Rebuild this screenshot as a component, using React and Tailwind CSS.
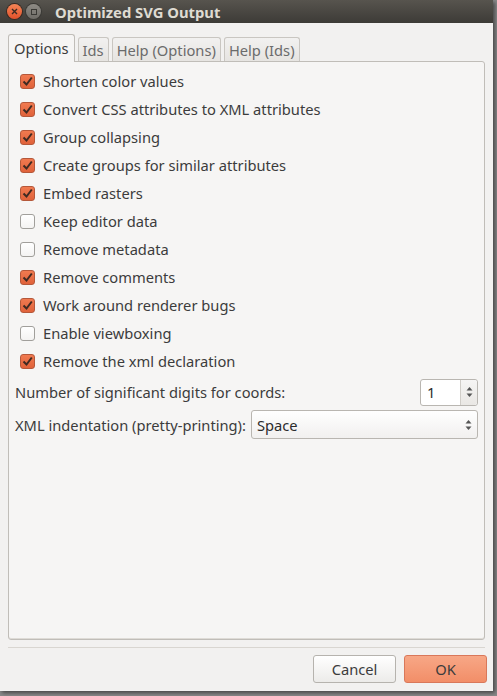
import { useState } from "react";

const options = [
  ["Shorten color values", true],
  ["Convert CSS attributes to XML attributes", true],
  ["Group collapsing", true],
  ["Create groups for similar attributes", true],
  ["Embed rasters", true],
  ["Keep editor data", false],
  ["Remove metadata", false],
  ["Remove comments", true],
  ["Work around renderer bugs", true],
  ["Enable viewboxing", false],
  ["Remove the xml declaration", true],
];

function Check({ checked, onClick }) {
  return (
    <span
      onClick={onClick}
      className={
        "flex h-[15px] w-[15px] shrink-0 items-center justify-center rounded-[3px] border " +
        (checked
          ? "border-[#b5583a] bg-gradient-to-b from-[#f07a50] to-[#e0623a]"
          : "border-[#a19f9b] bg-gradient-to-b from-white to-[#f4f3f2]")
      }
    >
      {checked && (
        <svg width="11" height="11" viewBox="0 0 11 11">
          <path d="M1.5 5.5 L4.5 8.5 L9.8 1.5" fill="none" stroke="#3f2a22" strokeWidth="2" />
        </svg>
      )}
    </span>
  );
}

function Arrows() {
  return (
    <svg width="7" height="12" viewBox="0 0 7 12">
      <path d="M3.5 1 L6.5 4.5 L0.5 4.5 Z" fill="#555" />
      <path d="M3.5 11 L6.5 7.5 L0.5 7.5 Z" fill="#555" />
    </svg>
  );
}

export default function App() {
  const [checks, setChecks] = useState(options.map((o) => o[1]));
  const tabs = ["Ids", "Help (Options)", "Help (Ids)"];

  return (
    <div className="h-[696px] w-[497px] bg-[#8a8a8a] font-['Noto_Sans',sans-serif] text-[14.7px] leading-[20px] text-[#3c3c3c]">
      <div className="flex h-[691px] w-[493px] flex-col bg-[#f2f1f0] shadow-[2px_2px_4px_rgba(0,0,0,0.5)]">
        <div className="flex h-[23px] items-center bg-gradient-to-b from-[#57544e] to-[#3d3b37] pl-[7px]">
          <span className="flex h-[15px] w-[15px] items-center justify-center rounded-full bg-gradient-to-b from-[#f58455] to-[#e1502a] shadow-[0_0_0_1px_#3a2a22]">
            <svg width="7" height="7" viewBox="0 0 7 7">
              <path d="M1 1 L6 6 M6 1 L1 6" stroke="#3c2a22" strokeWidth="1.4" />
            </svg>
          </span>
          <span className="ml-[4px] flex h-[15px] w-[15px] items-center justify-center rounded-full bg-gradient-to-b from-[#8e8b85] to-[#6f6c67] shadow-[0_0_0_1px_#3a3935]">
            <span className="h-[6px] w-[6px] border border-[#3a3935]" />
          </span>
          <span className="ml-[14px] text-[14.8px] font-bold text-[#dfdbd2]">Optimized SVG Output</span>
        </div>

        <div className="flex flex-1 flex-col px-[8px] pt-[11px]">
          <div className="flex items-end">
            <div className="relative z-10 -mb-px flex h-[28px] items-center rounded-t-[3px] border border-b-0 border-[#c0bdb8] bg-[#f6f5f4] px-[5px] pb-[2px] text-[#3c3c3c]">
              Options
            </div>
            {tabs.map((t) => (
              <div
                key={t}
                className="ml-[3px] flex h-[24px] items-center rounded-t-[3px] border border-b-0 border-[#c9c6c1] bg-gradient-to-b from-[#f2f1f0] to-[#e6e4e1] px-[4px] text-[#6b6b6b]"
              >
                {t}
              </div>
            ))}
          </div>

          <div className="flex h-[579px] flex-col rounded-b-[3px] rounded-tr-[3px] border border-[#c0bdb8] bg-[#f6f5f4] pl-[10px] pr-[6px] pt-[5px] shadow-[inset_0_-1px_0_#dedbd6]">
            {options.map(([label], i) => (
              <label key={label} className="flex h-[28px] items-center gap-[8px] pl-px">
                <Check
                  checked={checks[i]}
                  onClick={() => setChecks(checks.map((c, j) => (j === i ? !c : c)))}
                />
                <span>{label}</span>
              </label>
            ))}

            <div className="mt-[3px] flex h-[28px] items-center justify-between">
              <span className="-ml-[4px]">Number of significant digits for coords:</span>
              <div className="flex h-[27px] w-[58px] rounded-[3px] border border-[#b9b6b1] bg-white">
                <span className="flex-1 pl-[6px] leading-[25px] text-[#2c2c2c]">1</span>
                <div className="flex w-[17px] items-center justify-center rounded-r-[3px] border-l border-[#d0cdc8] bg-gradient-to-b from-[#f6f5f4] to-[#e9e7e4]">
                  <Arrows />
                </div>
              </div>
            </div>

            <div className="mt-[4px] flex h-[29px] items-center gap-[5px]">
              <span className="-ml-[4px] whitespace-nowrap">XML indentation (pretty-printing):</span>
              <div className="flex h-[29px] flex-1 items-center justify-between rounded-[3px] border border-[#b9b6b1] bg-gradient-to-b from-white to-[#f1f0ef] px-[5px]">
                <span className="text-[#2c2c2c]">Space</span>
                <Arrows />
              </div>
            </div>
          </div>

          <div className="mt-[7px] border-t border-[#d9d6d1]" />

          <div className="flex justify-end gap-[8px] pt-[7px]">
            <button className="h-[28px] w-[83px] rounded-[3px] border border-[#b6b3ae] bg-gradient-to-b from-white to-[#ecebe9] text-[#3c3c3c]">
              Cancel
            </button>
            <button className="-mr-[2px] h-[28px] w-[83px] rounded-[3px] border border-[#d9785a] bg-gradient-to-b from-[#f7a786] to-[#f28e68] text-[#3c3c3c]">
              OK
            </button>
          </div>
        </div>
      </div>
    </div>
  );
}
